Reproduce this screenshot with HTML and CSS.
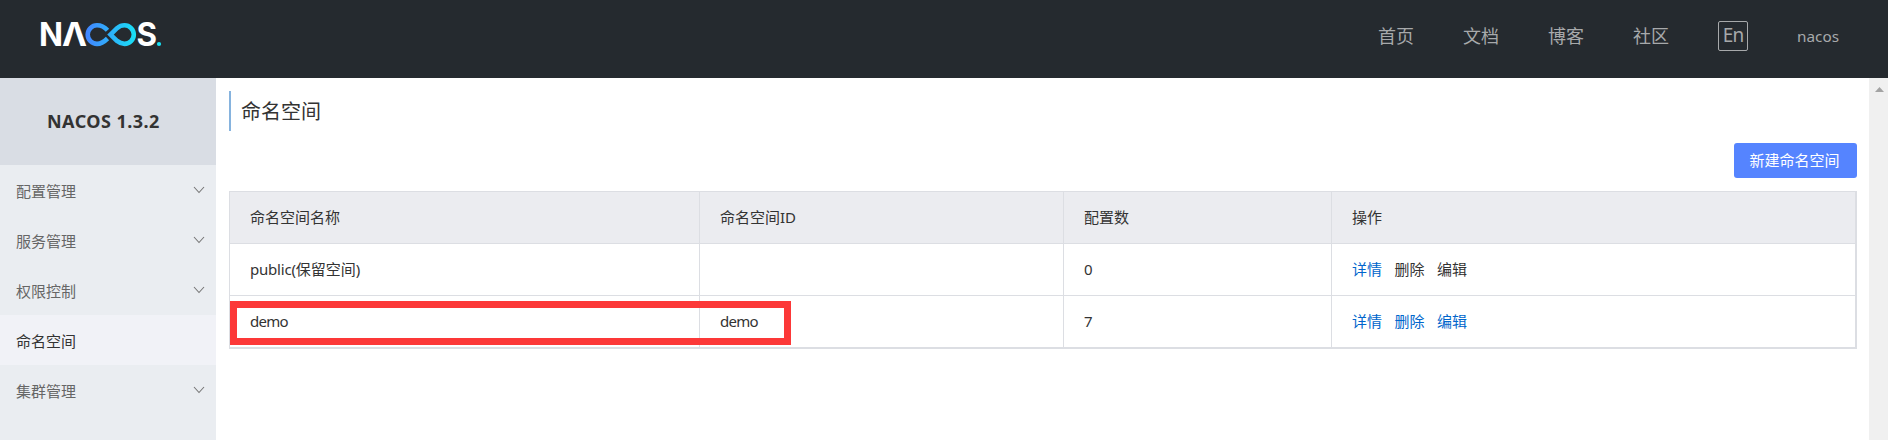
FILE: index.html
```html
<!DOCTYPE html>
<html lang="zh-CN">
<head>
<meta charset="utf-8">
<title>Nacos</title>
<link rel="stylesheet" href="styles.css">
</head>
<body>
<header class="header">
  <a class="logo" aria-label="Nacos">
    <svg width="122" height="26" viewBox="0 0 122 26">
      <defs>
        <linearGradient id="loop" gradientUnits="userSpaceOnUse" x1="46" y1="0" x2="96" y2="0">
          <stop offset="0" stop-color="#4286ff"/>
          <stop offset="1" stop-color="#17e2f5"/>
        </linearGradient>
      </defs>
      <g class="logo-letters">
        <text x="-2" y="24" textLength="24" lengthAdjust="spacingAndGlyphs">N</text>
        <text x="21" y="24" textLength="25" lengthAdjust="spacingAndGlyphs">Λ</text>
        <text x="95.5" y="24" textLength="20.500" lengthAdjust="spacingAndGlyphs">S</text>
      </g>
      <g fill="none" stroke="url(#loop)" stroke-width="4.6">
        <path d="M66.5 8.3C63.500 5 60 3.300 56 3.300A9.300 9.300 0 0 0 56 21.900C60 21.900 63.500 19.500 66.500 16.500"/>
        <path d="M69.500 12.600L76 6.200C79 3.700 81.500 3.300 83.500 3.300A9.300 9.300 0 0 1 83.500 21.900C81.500 21.900 79 21.300 76 18.900Z"/>
      </g>
      <circle cx="118" cy="22" r="2.100" fill="#17e2f5"/>
    </svg>
  </a>
  <nav class="nav">
    <a>首页</a>
    <a>文档</a>
    <a>博客</a>
    <a>社区</a>
    <span class="lang">En</span>
    <span class="user">nacos</span>
  </nav>
</header>
<div class="body">
  <aside class="sidebar">
    <h1 class="version">NACOS 1.3.2</h1>
    <ul class="menu">
      <li>配置管理<svg class="chevron" viewBox="0 0 12 8"><path d="M1 1l5 5.500L11 1"/></svg></li>
      <li>服务管理<svg class="chevron" viewBox="0 0 12 8"><path d="M1 1l5 5.500L11 1"/></svg></li>
      <li>权限控制<svg class="chevron" viewBox="0 0 12 8"><path d="M1 1l5 5.500L11 1"/></svg></li>
      <li class="active">命名空间</li>
      <li>集群管理<svg class="chevron" viewBox="0 0 12 8"><path d="M1 1l5 5.500L11 1"/></svg></li>
    </ul>
  </aside>
  <main class="main">
    <h2 class="title">命名空间</h2>
    <button class="create">新建命名空间</button>
    <div class="table">
      <div class="row head"><div>命名空间名称</div><div>命名空间ID</div><div>配置数</div><div>操作</div></div>
      <div class="row"><div><span><span class="latin">public(</span>保留空间)</span></div><div></div><div>0</div><div class="actions"><a>详情</a><span>删除</span><span>编辑</span></div></div>
      <div class="row"><div class="latin">demo</div><div class="latin">demo</div><div>7</div><div class="actions"><a>详情</a><a>删除</a><a>编辑</a></div></div>
      <div class="highlight"></div>
    </div>
  </main>
  <div class="scrollbar"><svg width="9" height="5" viewBox="0 0 9 5"><path d="M0 5L4.500 0L9 5Z" fill="#a3a3a3"/></svg></div>
</div>
</body>
</html>
```
FILE: styles.css
```css
* { box-sizing: border-box; }
body {
  margin: 0;
  height: 440px;
  overflow: hidden;
  display: flex;
  flex-direction: column;
  background: #fff;
  color: #333;
  font: 15px/20px "Noto Sans", "Noto Sans CJK SC", sans-serif;
}
.header {
  flex: none;
  height: 78px;
  padding: 0 48px 0 41px;
  display: flex;
  justify-content: space-between;
  background: #252a2f;
}
.logo { padding-top: 22px; }
.logo svg { display: block; overflow: visible; }
.logo-letters { font: 700 32px Inter, sans-serif; fill: #fff; }
.nav {
  display: flex;
  align-items: center;
  gap: 49px;
  height: 72px;
  color: #a7a9ab;
  font-size: 18px;
}
.nav a { width: 36px; }
.lang {
  width: 30px;
  height: 30px;
  border: 1px solid #a7a9ab;
  border-radius: 2px;
  font-size: 19px;
  line-height: 26px;
  text-align: center;
  letter-spacing: -0.8px;
}
.user { font-size: 15.3px; width: 43px; }
.body { flex: 1; display: flex; min-height: 0; }
.sidebar { width: 216px; background: #eaedf1; }
.version {
  margin: 0;
  height: 87px;
  line-height: 87px;
  padding-left: 47px;
  background: #d9dde4;
  font-size: 18px;
  font-weight: 700;
  letter-spacing: 0.45px;
  white-space: nowrap;
}
.menu { margin: 0; padding: 0; list-style: none; }
.menu li {
  height: 50px;
  padding: 2px 11px 0 16px;
  display: flex;
  align-items: center;
  justify-content: space-between;
  color: #666;
}
.menu .active { background: #f1f2f7; color: #333; }
.chevron {
  width: 12px;
  height: 8px;
  margin-bottom: 2px;
  fill: none;
  stroke: #777;
  stroke-width: 1.1;
}
.main {
  flex: 1;
  padding: 13px 12px 0 13px;
  display: flex;
  flex-direction: column;
}
.title {
  margin: 0 0 12px;
  height: 40px;
  padding-left: 10px;
  border-left: 2px solid #86b3de;
  font-size: 20px;
  font-weight: 400;
  line-height: 41px;
}
.create {
  align-self: flex-end;
  width: 123px;
  height: 35px;
  margin: 0 0 13px;
  padding: 0 2px 2px 0;
  border: 0;
  border-radius: 3px;
  background: #5584ff;
  color: #fff;
  font: inherit;
}
.table {
  position: relative;
  height: 158px;
  border: solid #dcdee3;
  border-width: 1px 2px 2px 1px;
}
.row {
  display: grid;
  grid-template-columns: 470px 364px 268px 1fr;
  height: 52px;
}
.row > div {
  padding: 0 20px 2px;
  display: flex;
  align-items: center;
  border-right: 1px solid #dcdee3;
  border-bottom: 1px solid #dcdee3;
}
.row > div:last-child { border-right: 0; }
.row:nth-child(3) { height: 51px; }
.row:nth-child(3) > div { border-bottom: 0; }
.head { background: #ebecf0; }
.latin { letter-spacing: -0.7px; }
.row span .latin { letter-spacing: -0.2px; }
.actions { gap: 12.5px; }
.actions a { color: #06c; }
.highlight {
  position: absolute;
  left: 0;
  top: 109px;
  width: 561px;
  height: 44px;
  border: 7px solid #fc3838;
}
.scrollbar {
  width: 19px;
  padding: 9px 0 0 6px;
  background: #f0f0f0;
}
.scrollbar svg { display: block; }
```
